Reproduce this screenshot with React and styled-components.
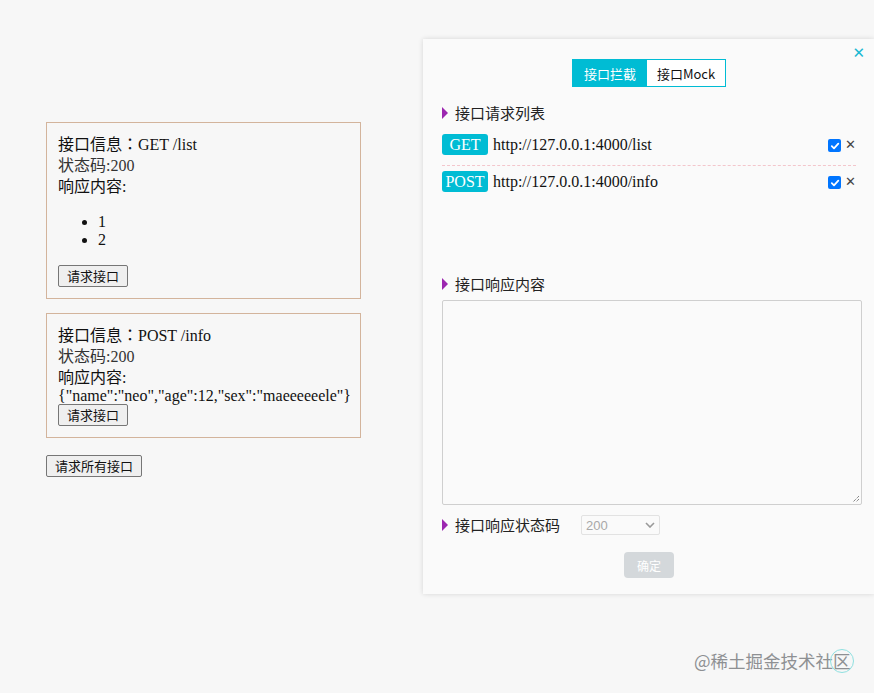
import React from "react";
import styled, { createGlobalStyle } from "styled-components";

const Global = createGlobalStyle`
  html, body { margin: 0; padding: 0; background: #f7f7f7; }
  body { font-family: "Liberation Serif", "Noto Sans CJK JP", serif; color: #111; }
  * { box-sizing: border-box; }
`;

const Page = styled.div`
  position: relative;
  width: 874px;
  height: 693px;
  display: flex;
  align-items: flex-start;
  overflow: hidden;
`;

const LeftCol = styled.div`
  width: 423px;
  padding: 122px 0 0 46px;
  display: flex;
  flex-direction: column;
  align-items: flex-start;
`;

const Card = styled.div`
  width: 315px;
  border: 1px solid #d3b49c;
  padding: 11px;
  margin-bottom: ${(p) => p.$mb || 0}px;
  font-size: 16px;
`;

const Line = styled.div`
  height: ${(p) => p.$h || 21}px;
  line-height: ${(p) => p.$h || 21}px;
  white-space: nowrap;
  color: ${(p) => p.$c || "#111"};
`;

const List = styled.ul`
  margin: 16px 0;
  padding-left: 40px;
  li { height: 18px; line-height: 18px; }
`;

const NativeButton = styled.button`
  font-family: "Noto Sans CJK SC", sans-serif;
  font-size: 13px;
  height: 22px;
  line-height: 18px;
  padding: 0 8px;
  border: 1px solid #767676;
  border-radius: 2px;
  background: #efefef;
  color: #111;
  display: block;
`;

const Panel = styled.div`
  position: relative;
  margin-top: 39px;
  width: 451px;
  height: 555px;
  background: #fafafa;
  box-shadow: 0 0 5px rgba(0, 0, 0, 0.14);
  padding: 20px 18px 16px 19px;
  display: flex;
  flex-direction: column;
  font-family: "Noto Sans CJK SC", sans-serif;
`;

const Close = styled.div`
  position: absolute;
  right: 9px;
  top: 6px;
  color: #1bb8d2;
  font-family: "DejaVu Sans", sans-serif;
  font-size: 15px;
  line-height: 16px;
`;

const Tabs = styled.div`
  display: flex;
  align-self: center;
  border: 1px solid #00bcd4;
  height: 28px;
`;

const Tab = styled.div`
  width: ${(p) => p.$w}px;
  display: flex;
  align-items: center;
  justify-content: center;
  font-size: 13px;
  background: ${(p) => (p.$active ? "#00bcd4" : "#fff")};
  color: ${(p) => (p.$active ? "#fff" : "#111")};
`;

const Heading = styled.div`
  display: flex;
  align-items: center;
  height: 22px;
  padding-bottom: 4px;
  margin-top: ${(p) => p.$mt || 0}px;
  font-size: 15px;
  color: #222;
  white-space: nowrap;
  &::before {
    content: "";
    width: 0;
    height: 0;
    border-top: 6px solid transparent;
    border-bottom: 6px solid transparent;
    border-left: 6px solid #9c27b0;
    margin-right: 7px;
    margin-top: 2px;
  }
`;

const ReqList = styled.div`
  height: 145px;
  margin-top: 4px;
`;

const Row = styled.div`
  display: flex;
  align-items: center;
  padding: 5px 0 10px;
  border-bottom: ${(p) => (p.$sep ? "1px dashed #f3c6cc" : "none")};
`;

const Badge = styled.span`
  background: #00bcd4;
  color: #fff;
  font-family: "Liberation Serif", serif;
  font-size: 16px;
  height: 21px;
  line-height: 21px;
  width: 46px;
  text-align: center;
  border-radius: 3px;
  margin-right: 5px;
`;

const Url = styled.span`
  font-family: "Liberation Serif", serif;
  font-size: 16px;
  color: #111;
  flex: 1;
  line-height: 21px;
`;

const Check = styled.span`
  width: 13px;
  height: 13px;
  border-radius: 2px;
  background: #0075ff;
  display: flex;
  align-items: center;
  justify-content: center;
  margin-right: 4px;
  margin-top: 2px;
`;

const Remove = styled.span`
  font-family: "DejaVu Sans", sans-serif;
  font-size: 13px;
  color: #444;
  line-height: 13px;
  margin-top: -1px;
`;

const TextArea = styled.div`
  margin-top: 4px;
  width: 420px;
  height: 205px;
  border: 1px solid #cfcfcf;
  border-radius: 2px;
  background: #fafafa;
  position: relative;
`;

const Grip = styled.svg`
  position: absolute;
  right: 1px;
  bottom: 1px;
`;

const StatusRow = styled.div`
  display: flex;
  align-items: center;
  margin-top: 10px;
`;

const Select = styled.div`
  margin-left: 21px;
  margin-top: -2px;
  width: 79px;
  height: 20px;
  border: 1px solid #e2e2e2;
  border-radius: 2px;
  background: #fafafa;
  display: flex;
  align-items: center;
  justify-content: space-between;
  padding: 0 4px 0 4px;
  font-family: "Liberation Sans", sans-serif;
  font-size: 13px;
  color: #a8a8a8;
`;

const Confirm = styled.div`
  align-self: center;
  margin-top: 15px;
  width: 50px;
  height: 26px;
  border-radius: 4px;
  background: #d4d8db;
  color: #fff;
  font-size: 12px;
  display: flex;
  align-items: center;
  justify-content: center;
`;

const Watermark = styled.div`
  position: absolute;
  left: 694px;
  top: 649px;
  font-family: "Noto Sans CJK SC", sans-serif;
  font-size: 17.5px;
  line-height: 24px;
  color: #8e9093;
  display: flex;
  align-items: center;
`;

const Ring = styled.span`
  position: absolute;
  right: -3px;
  top: 0;
  width: 24px;
  height: 24px;
  border: 1px solid #8fe0e0;
  border-radius: 50%;
`;

const CheckMark = () => (
  <svg width="10" height="10" viewBox="0 0 10 10">
    <path d="M1.8 5.2 L4 7.3 L8.3 2.6" fill="none" stroke="#fff" strokeWidth="1.8" strokeLinecap="round" strokeLinejoin="round" />
  </svg>
);

export default function App() {
  return (
    <>
      <Global />
      <Page>
        <LeftCol>
          <Card $mb={14}>
            <Line>接口信息：GET /list</Line>
            <Line $c="#333">状态码:200</Line>
            <Line>响应内容:</Line>
            <List>
              <li>1</li>
              <li>2</li>
            </List>
            <NativeButton>请求接口</NativeButton>
          </Card>
          <Card $mb={17}>
            <Line>接口信息：POST /info</Line>
            <Line $c="#333">状态码:200</Line>
            <Line>响应内容:</Line>
            <Line $h={16}>{'{"name":"neo","age":12,"sex":"maeeeeeele"}'}</Line>
            <NativeButton>请求接口</NativeButton>
          </Card>
          <NativeButton>请求所有接口</NativeButton>
        </LeftCol>
        <Panel>
          <Close>✕</Close>
          <Tabs>
            <Tab $w={74} $active>接口拦截</Tab>
            <Tab $w={78}>接口Mock</Tab>
          </Tabs>
          <Heading $mt={16}>接口请求列表</Heading>
          <ReqList>
            <Row $sep>
              <Badge>GET</Badge>
              <Url>http://127.0.0.1:4000/list</Url>
              <Check><CheckMark /></Check>
              <Remove>✕</Remove>
            </Row>
            <Row>
              <Badge>POST</Badge>
              <Url>http://127.0.0.1:4000/info</Url>
              <Check><CheckMark /></Check>
              <Remove>✕</Remove>
            </Row>
          </ReqList>
          <Heading>接口响应内容</Heading>
          <TextArea>
            <Grip width="9" height="9" viewBox="0 0 9 9">
              <path d="M8 2 L2 8 M8 5 L5 8" stroke="#555" strokeWidth="1" strokeDasharray="1 1" />
            </Grip>
          </TextArea>
          <StatusRow>
            <Heading>接口响应状态码</Heading>
            <Select>
              <span>200</span>
              <svg width="10" height="6" viewBox="0 0 10 6">
                <path d="M1 1 L5 5 L9 1" fill="none" stroke="#999" strokeWidth="1.6" />
              </svg>
            </Select>
          </StatusRow>
          <Confirm>确定</Confirm>
        </Panel>
        <Watermark>
          @稀土掘金技术社区
          <Ring />
        </Watermark>
      </Page>
    </>
  );
}
